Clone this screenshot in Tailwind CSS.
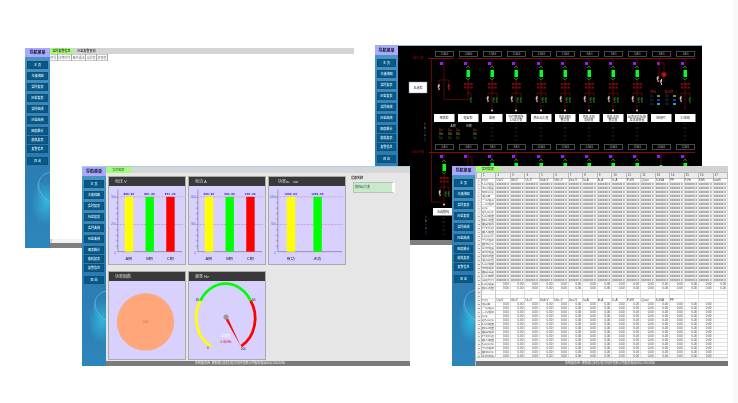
<!DOCTYPE html>
<html lang="zh-CN">
<head>
    <meta charset="UTF-8">
    <meta name="viewport" content="width=device-width, initial-scale=1.0">
    <title>电力监控系统</title>
    <script src="https://cdn.jsdelivr.net/npm/@tailwindcss/browser@4"></script>
</head>
<body class="bg-white font-['Liberation_Sans','Noto_Sans_CJK_SC',sans-serif] text-[3px] leading-[4px] text-[#222]">
    <main class="relative h-screen overflow-hidden border-r-[5px] border-[#f9f9f9] will-change-transform">

        <!-- Alarm window -->
        <section class="absolute left-[25px] top-[48px] w-[329px] h-[200px] flex overflow-hidden bg-white">
            <aside class="menu relative w-[25px] shrink-0"></aside>
            <div class="flex-1 min-w-0 flex flex-col">
                <nav class="flex gap-[2px] h-[6px] bg-[#d4d4d4] items-stretch">
                    <button class="w-[23px] bg-[#a5fa78] text-center leading-[6px] font-medium">实时报警信息</button>
                    <button class="w-[23px] text-center leading-[6px] font-medium">历史报警查询</button>
                </nav>
                <table class="w-[58px] border-collapse text-[#777] border-y border-[#ccc]">
                    <thead>
                        <tr class="h-[6px]">
                            <th class="border-r border-[#aaa] font-normal">序号</th>
                            <th class="border-r border-[#aaa] font-normal">日期时间</th>
                            <th class="border-r border-[#aaa] font-normal">事件描述</th>
                            <th class="border-r border-[#aaa] font-normal">当前值</th>
                            <th class="border-r border-[#aaa] font-normal">报警值</th>
                        </tr>
                    </thead>
                </table>
                <div class="flex-1"></div>
                <div class="h-[4px] bg-[#f2f2f2] border-l-2 border-[#ccc]"></div>
                <footer class="h-[5px] bg-[#7f7f7f]"></footer>
            </div>
        </section>

        <!-- One-line diagram window -->
        <section class="absolute left-[375px] top-[45px] w-[327px] h-[200px] flex overflow-hidden bg-black border-t border-[#8fb9cc]">
            <aside class="menu relative w-[23px] shrink-0"></aside>
            <div class="flex-1 min-w-0 flex flex-col">
                <svg id="diagram" class="block w-full flex-1 min-h-0" viewBox="398 46 304 194" preserveAspectRatio="none"></svg>
                <footer class="h-[5px] bg-[#7f7f7f]"></footer>
            </div>
        </section>

        <!-- Real-time chart window -->
        <section class="absolute left-[82px] top-[166px] w-[328px] h-[200px] flex overflow-hidden bg-[#e6e6e6] border-t border-[#a9cfe6]">
            <aside class="menu relative w-[24px] shrink-0"></aside>
            <div class="flex-1 min-w-0 flex flex-col">
                <nav class="h-[6px] flex bg-[#d6d6d6]">
                    <button class="w-[25px] bg-[#a5fa78] text-center leading-[6px] text-[#363]">实时图表</button>
                </nav>
                <div class="flex-1 min-h-0 flex items-start gap-[5px] pt-[3px] pl-[2px]">
                    <div class="grid grid-cols-3 gap-x-[2px] gap-y-[6px]">
                        <article class="w-[78px] border border-[#aaa] bg-[#d8d1fe]">
                            <h2 class="h-[9px] bg-[#393939] text-[#ddd] pl-[6px] text-[4px] leading-[9px]">电压 V</h2>
                            <svg class="chart block w-full h-[78px]" viewBox="0 0 77 78" data-chart="u"></svg>
                        </article>
                        <article class="w-[78px] border border-[#aaa] bg-[#d8d1fe]">
                            <h2 class="h-[9px] bg-[#393939] text-[#ddd] pl-[6px] text-[4px] leading-[9px]">电流 A</h2>
                            <svg class="chart block w-full h-[78px]" viewBox="0 0 77 78" data-chart="i"></svg>
                        </article>
                        <article class="w-[78px] border border-[#aaa] bg-[#d8d1fe]">
                            <h2 class="h-[9px] bg-[#393939] text-[#ddd] pl-[9px] text-[4px] leading-[9px]">功率w、var</h2>
                            <svg class="chart block w-full h-[78px]" viewBox="0 0 77 78" data-chart="p"></svg>
                        </article>
                        <article class="w-[78px] border border-[#aaa] bg-[#d8d1fe]">
                            <h2 class="h-[9px] bg-[#393939] text-[#ddd] pl-[6px] text-[4px] leading-[9px]">功率因数</h2>
                            <svg class="block w-full h-[78px]" viewBox="0 0 77 78">
                                <circle cx="37" cy="41" r="29" fill="#ffa67b"/>
                                <text x="37" y="42" font-size="3" text-anchor="middle" fill="#b97a60">0.00</text>
                            </svg>
                        </article>
                        <article class="w-[78px] border border-[#aaa] bg-[#d8d1fe]">
                            <h2 class="h-[9px] bg-[#393939] text-[#ddd] pl-[6px] text-[4px] leading-[9px]">频率 Hz</h2>
                            <svg class="block w-full h-[78px]" viewBox="0 0 77 78">
                                <g fill="none" stroke-width="2.8">
                                    <path d="M22 65.500A29 33 0 0 1 11.500 19.500" stroke="#ffff00"/>
                                    <path d="M11.500 19.500A29 33 0 0 1 62.500 19.500" stroke="#00ff00"/>
                                    <path d="M62.500 19.500A29 33 0 0 1 53 65.500" stroke="#ff0000"/>
                                </g>
                                <path d="M36.500 37.500L39 36L52.500 65.500Z" fill="#f01020"/>
                                <circle cx="37.500" cy="36" r="2.600" fill="#999"/>
                                <g font-size="3" text-anchor="middle" fill="#222">
                                    <text x="8.500" y="20">30</text>
                                    <text x="65.500" y="20">60</text>
                                    <text x="19" y="68">0</text>
                                    <text x="55" y="69">100</text>
                                    <text x="37" y="56" fill="#fff">当前值</text>
                                    <text x="37.500" y="62" fill="#e01030">0.000Hz</text>
                                </g>
                            </svg>
                        </article>
                    </div>
                    <div class="flex flex-col">
                        <label for="device" class="text-[3px] leading-[4px] pb-[2px] font-bold">设备名称</label>
                        <select id="device" class="appearance-none ml-[2px] w-[42px] h-[11px] bg-[#c9e9cb] border border-[#b5c5b5] border-r-[3px] border-r-white pl-[1px] text-[3px] leading-[9px] text-[#354]">
                            <option>馈线动力变</option>
                        </select>
                    </div>
                </div>
                <footer class="h-[5px] bg-[#7b7b7b] text-[#eee] pl-[89px] leading-[5px] whitespace-nowrap">系统服务商: 施耐德 (深圳) 电力科技有限公司服务电话400-133-3456</footer>
            </div>
        </section>

        <!-- Report window -->
        <section class="absolute left-[452px] top-[166px] w-[276px] h-[200px] flex overflow-hidden bg-white">
            <aside class="menu relative w-[23px] shrink-0"></aside>
            <div class="flex-1 min-w-0 flex flex-col border-l border-[#bbb]">
                <nav class="h-[6px] flex bg-[#d2d2d2]">
                    <button class="w-[24px] bg-[#a5fa78] text-center leading-[6px]">实时报表</button>
                </nav>
                <div class="flex-1 min-h-0 flex">
                    <table id="report" class="w-full h-full table-fixed border-collapse text-[2px] leading-[3px] text-[#444]"></table>
                </div>
                <div class="h-[4px] bg-[#f4f4f4] border-t border-[#ccc]"></div>
                <footer class="h-[5px] bg-[#757575] text-[#eee] pl-[89px] leading-[5px] whitespace-nowrap">系统服务商: 施耐德 (深圳) 电力科技有限公司服务电话400-133-3456</footer>
            </div>
        </section>
    </main>

    <script>
        // Side menu shared by all windows
        const menuItems = ['主 页', '主接线图', '实时报表', '历史报表', '实时曲线', '历史曲线', '图表统计', '能耗报表', '报警信息', '退 出'];
        const menuGap = ['mt-[4px]', 'mt-[3px]', 'mt-[3px]', 'mt-[3px]', 'mt-[3px]', 'mt-[3px]', 'mt-[3px]', 'mt-[1px]', 'mt-[1px]', 'mt-[4px]'];
        document.querySelectorAll('.menu').forEach(menu => {
            menu.innerHTML = `
                <div class="h-full flex flex-col bg-linear-to-b from-[#4a96c6] via-[#2b7bb0] to-[#2d86ba]">
                    <h1 class="h-[9px] bg-[#aaa8ff] text-[4px] leading-[9px] font-bold text-center text-[#112]">导航菜单</h1>
                    ${menuItems.map((item, i) => `<button class="${menuGap[i]} mx-[2px] h-[8px] shrink-0 bg-[#075a88] border border-[#0d4f78] text-[#e4f2fa] text-[3px] leading-[6px] font-medium text-center whitespace-nowrap">${item}</button>`).join('')}
                    <svg class="block w-full flex-1 min-h-0" viewBox="0 0 24 81" preserveAspectRatio="none">
                        <defs>
                            <radialGradient id="glow"><stop offset="0" stop-color="#32c0e6" stop-opacity=".8"/><stop offset="1" stop-color="#32c0e6" stop-opacity="0"/></radialGradient>
                        </defs>
                        <ellipse cx="20" cy="37" rx="14" ry="22" fill="url(#glow)"/>
                        <path d="M24 7C9 10 10 28 24 36" fill="none" stroke="#8cd4ee" stroke-width=".6" opacity=".8"/>
                        <path d="M24 39C16 34 10 28 13 16" fill="none" stroke="#5cbbe0" stroke-width=".5" opacity=".8"/>
                    </svg>
                </div>`;
        });

        // Bar charts
        const charts = {
            u: { bars: [[16, '#ffff00', '500.00', 'A相'], [37, '#00ff00', '501.00', 'B相'], [58, '#ff0000', '501.90', 'C相']], ticks: ['500', '250', '0'] },
            i: { bars: [[16, '#ffff00', '600.00', 'A相'], [37, '#00ff00', '600.00', 'B相'], [58, '#ff0000', '600.00', 'C相']], ticks: ['600', '300', '0'] },
            p: { bars: [[18, '#ffff00', '1000.00', '有功'], [45, '#00ff00', '1000.00', '无功']], ticks: ['1000', '500', '0'] }
        };
        document.querySelectorAll('.chart').forEach(svg => {
            const { bars, ticks } = charts[svg.dataset.chart];
            let out = '<path d="M9 3V66M9 66H74" stroke="#77778c" stroke-width=".7"/>';
            for (let y = 11; y < 66; y += 5.5) {
                out += `<path d="M7 ${y}H9" stroke="#77778c" stroke-width=".6"/>`;
            }
            out += '<path d="M7 10.500H75M7 38.500H75" stroke="#d58bd0" stroke-width=".7" stroke-dasharray="2.500 1"/>';
            ticks.forEach((t, i) => {
                out += `<text x="7" y="${[11.5, 39.5, 68][i]}" font-size="3" text-anchor="end" fill="#3a78e8">${t}</text>`;
            });
            bars.forEach(([x, color, value, name]) => {
                out += `<rect x="${x}" y="10.500" width="8.500" height="55.500" fill="${color}"/>
                    <text x="${x + 4}" y="9" font-size="3" font-weight="bold" font-family="Liberation Mono" text-anchor="middle" fill="#3030e0">${value}</text>
                    <text x="${x + 4}" y="74" font-size="4" text-anchor="middle" fill="#222">${name}</text>`;
            });
            svg.innerHTML = out;
        });

        // One-line diagram
        const red = '#7c0808';
        const wire = d => `<path d="${d}" fill="none" stroke="${red}" stroke-width=".7"/>`;
        const label = (x, y, t, fill, size = 3) => `<text x="${x}" y="${y}" font-size="${size}" text-anchor="middle" fill="${fill}">${t}</text>`;
        const columns = [444, 468, 492, 516, 541, 565, 589, 613, 637, 661, 685];
        const topNames = ['21AG', '24AG', '17AG', '15AG', '13AG', '11AG', '9AG', '7AG', '5AG', '3AG', '1AG'];
        const lowNames = ['5AG', '6AG', '7AG', '8AG', '10AG', '12AG', '14AG', '16AG', '18AG', '20AG', '22AG'];
        const loads = [['母联柜'], ['电容柜'], ['备用'], ['中间变电所', '1#动力变'], ['热轧动力变'], ['热轧辅机', '整流变'], ['热轧主机', '励磁变'], ['热轧主机', '整流变'], ['动态无功补偿', '及滤波装置'], ['进线PT'], ['1#进线']];
        const legend = ['#b02020', '#8a8a20', '#2838a0', '#208a9a', '#70208a'];

        const frame = (x, y, t) => `<rect x="${x - 8.5}" y="${y}" width="18" height="5" fill="#000" stroke="#5a5a5a" stroke-width=".8"/>` + label(x + 0.5, y + 3.7, t, '#999');
        const mark = (x, y) => `<rect x="${x - 4}" y="${y}" width="3" height="3" fill="#8a22ff"/>`;
        const leg = (x, y, color) => `<path d="M${x} ${y}v3m0 1v2m-.7 -5v3" stroke="${color}" stroke-width="1"/>`;

        function breaker(x, y) {
            return wire(`M${x} ${y - 12}V${y + 24}`) +
                `<path d="M${x - 2} ${y - 2}l2 -2l2 2M${x - 2} ${y + 8}l2 2l2 -2" fill="none" stroke="#0b8a0b" stroke-width=".9"/>
                <rect x="${x - 1.5}" y="${y}" width="3.500" height="7" fill="#0f2"/>
                <path d="M${x - 4} ${y + 14}h9M${x - 4} ${y + 17.5}h9" stroke="#7a0c0c" stroke-width="2" stroke-dasharray="2.400 .8"/>`;
        }

        function feeder(x, y) {
            return breaker(x, y) +
                wire(`M${x - 4} ${y + 33}V${y + 23}H${x + 5}V${y + 33}M${x} ${y + 23}V${y + 40}`) +
                leg(x - 4, y + 26, '#ddd') + leg(x + 2, y + 27, '#0a7a20') + leg(x + 5, y + 27, '#0a7a20') +
                `<circle cx="${x}" cy="${y + 40.5}" r="1" fill="#f2dada"/>`;
        }

        let d = wire('M431.500 58V202H443M431.500 58H432');
        d += `<path d="M428 58.500H454M458 58.500H695M429 152.500H695" stroke="#8c0808" stroke-width="1"/>`;
        d += label(418, 59, '10kV I段', '#a01010') + label(418, 152.5, '10kV II段', '#a01010');
        d += `<rect x="409" y="82" width="18" height="11" fill="#fff" stroke="#88a" stroke-width=".5"/>` + label(418, 89, '五选柜', '#333');

        columns.forEach((x, i) => {
            d += frame(x, 51.5, topNames[i]) + frame(x, 144.5, lowNames[i]) + mark(x, 62) + mark(x, 155);
            if (i === 0) {
                d += wire(`M${x} 58V99.500H468V92M${x - 5} 91V80H${x + 5}V91`) + leg(x - 5, 84, '#ddd') + leg(x + 5, 84, '#a22');
            } else if (i === 1) {
                d += breaker(x, 70) + wire(`M${x} 93H471V102`) + leg(471, 97, '#0a7a20');
            } else if (i === 9) {
                d += wire('M659 58V84M659 63H664V82') + '<circle cx="664" cy="74.500" r="2.500" fill="#b01818" stroke="#600" stroke-width=".7"/>' + leg(658, 76, '#ddd') + leg(661.5, 79, '#ccc');
                ['#8a8a20', '#2030c8', '#30a0b0'].forEach((c, k) => {
                    d += label(652, 97 + k * 4, 'Ua', '#284868') + `<rect x="657" y="${95 + k * 4}" width="3" height="2" fill="${c}"/>` +
                        label(667, 97 + k * 4, 'Ub', '#284868') + `<rect x="673" y="${95 + k * 4}" width="3" height="2" fill="${c}"/>`;
                });
                d += label(653, 93, '母线', '#c02020') + label(669, 93, '电压表', '#c02020');
            } else if (i === 10) {
                d += breaker(x, 70) + wire('M681 104V93H690V104M685 93V110') + leg(681, 96, '#ddd') + leg(690, 97, '#0a7a20');
            } else {
                d += feeder(x, 70);
            }

            // load name plate
            d += `<rect x="${x - 10}" y="114" width="20.500" height="8" fill="#fff"/>`;
            loads[i].forEach((t, k) => {
                d += label(x, loads[i].length === 1 ? 119 : 117.5 + k * 3.5, t, '#333');
            });
            if (i > 1 && i !== 9) {
                legend.forEach((c, k) => {
                    d += `<path d="M${x - 1.5} ${124 + k * 4}h3" stroke="${c}" stroke-width=".7" opacity=".55"/>`;
                });
            }

            // second busbar
            if (i === 1) {
                d += wire('M468 152V166M468 157H472V168');
            } else if (i === 9) {
                d += wire('M661 152V166') + '<rect x="659.500" y="165" width="3" height="6" fill="#0f2"/>';
            } else {
                d += feeder(x, i === 0 ? 164 : 163);
            }
        });

        // phase values
        legend.forEach((c, k) => {
            d += label(425, 125 + k * 4, ['Ia', 'Ib', 'Ic', 'P', 'Q'][k], c) + label(426, 218 + k * 4, ['Ia', 'Ib', 'Ic', 'P', 'Q'][k], c);
            d += `<path d="M442 ${218 + k * 4}h3" stroke="${c}" stroke-width=".7" opacity=".6"/>`;
        });
        d += label(453, 127, 'A相', '#ccc') + label(469, 127, 'B相', '#ccc');
        [441, 450, 458, 475].forEach(x => {
            d += label(x, 131, 'Ua', '#c03030') + label(x, 135, 'Ub', '#a8a830') + label(x, 139, 'Uc', '#309030');
        });
        d += `<rect x="433" y="208" width="20" height="7.500" fill="#fff"/>` + label(443, 213, '五选馈线', '#333');
        document.getElementById('diagram').innerHTML = d;

        // Report table
        const names = ['有功电度', '无功电度', '视在功率', '电流A', '一次电流', '二次电压', '功率', '总有功率', '有功需量', '频率测量', '最高电压', '开关状态', '最大需量', '有功功率', '平均电压', '最低功率', '正向电度', '反向电度', '电压测量', '电流总值', '有功电能', '母线电压', '最高温度', '功率因数', '当前时间', '有功电度', '频率测量'];
        const units = ['Ua-V', 'Ub-V', 'Uc-V', 'Uab-V', 'Ubc-V', 'Uca-V', 'Ia-A', 'Ib-A', 'Ic-A', 'P-kW', 'Q-var', 'S-kVA', 'PF', 'F-Hz', 'kWh', 'kvarh'];
        let rows = '<tr class="h-[6px] bg-[#ececec]"><th class="w-[5px] border border-[#bbb]"></th>';
        for (let c = 1; c <= 17; c++) {
            rows += `<th class="border border-[#bbb] font-normal text-left pl-px text-[3px]">${c}</th>`;
        }
        rows += '</tr>';
        for (let r = 0; r < 46; r++) {
            const blank = r === 28 || r === 29;
            const head = r === 0 || r === 30;
            const name = head ? '时间' : blank ? '' : names[(r - 1) % 27];
            rows += `<tr class="border-b border-[#e0e0e0]"><th class="p-0 border-r border-[#bbb] bg-[#f0f0f0] font-normal text-[2px]">${r + 1}</th><td class="p-0 border-r border-[#ccc] text-[3px] leading-[3px] whitespace-nowrap overflow-hidden">${name}</td>`;
            for (let c = 0; c < 16; c++) {
                if (head) {
                    rows += `<td class="p-0 border-r border-[#ddd] text-[3px]">${r === 30 && c > 12 ? '' : units[c]}</td>`;
                } else if (blank) {
                    rows += '<td class="p-0 border-r border-[#ddd]"></td>';
                } else if (r < 26) {
                    rows += '<td class="p-0 border-r border-[#ddd] bg-[#f2f2f2] text-[#888] font-bold text-[3px] leading-[3px] whitespace-nowrap overflow-hidden">###### #</td>';
                } else {
                    rows += `<td class="p-0 pr-px border-r border-[#ddd] text-right text-[3px] leading-[3px]">${r > 30 && c > 14 ? '' : '0.00'}</td>`;
                }
            }
            rows += '</tr>';
        }
        document.getElementById('report').innerHTML = rows;
    </script>
</body>
</html>
